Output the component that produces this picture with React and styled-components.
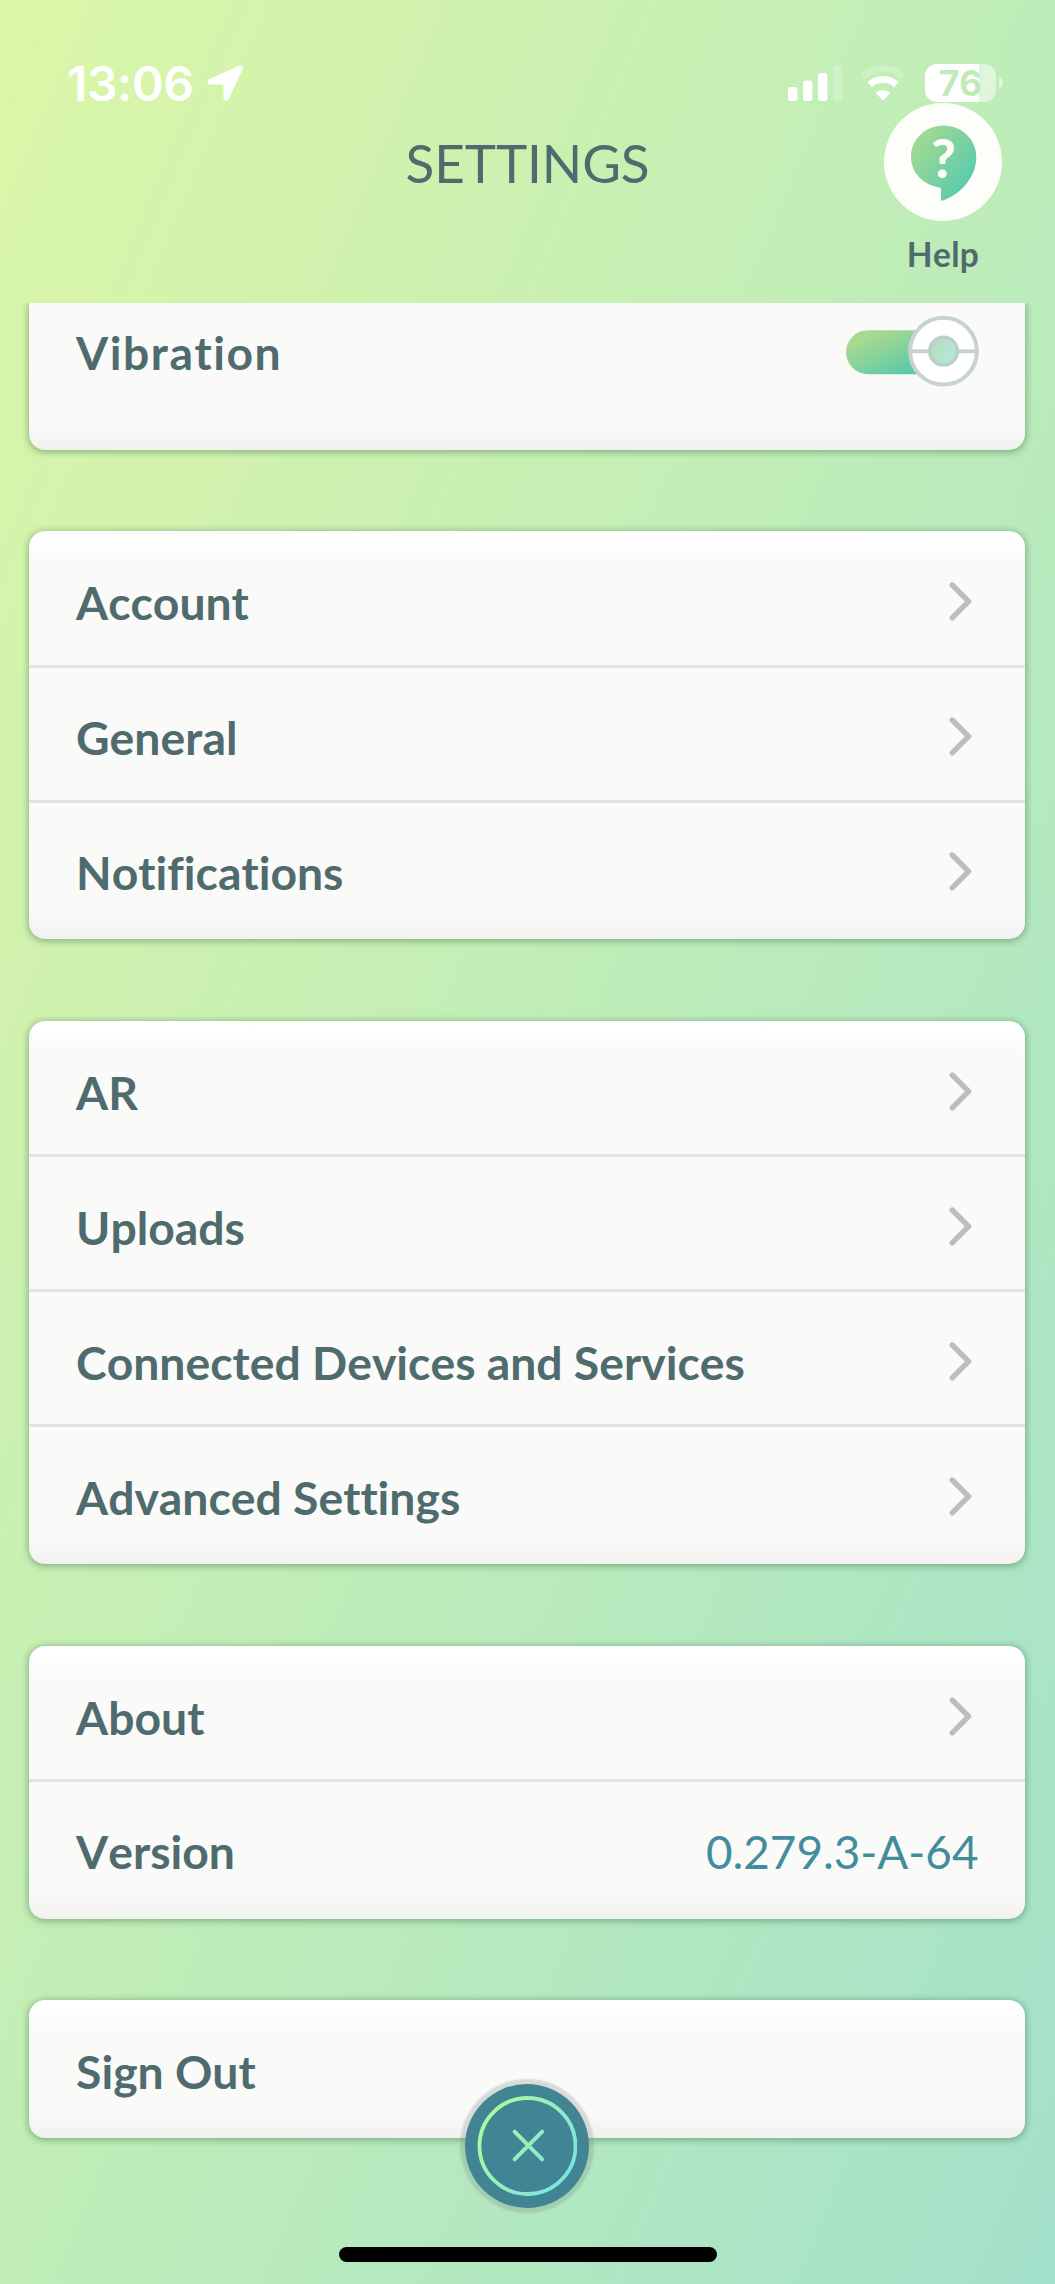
import styled, { createGlobalStyle } from "styled-components";

const groups = [
  [{ label: "Account" }, { label: "General" }, { label: "Notifications" }],
  [
    { label: "AR" },
    { label: "Uploads" },
    { label: "Connected Devices and Services" },
    { label: "Advanced Settings" },
  ],
  [{ label: "About" }, { label: "Version", value: "0.279.3-A-64" }],
  [{ label: "Sign Out", plain: true }],
];

const StatusBar = () => (
  <StatusStyled>
    <Clock>13:06</Clock>
    <svg className="location" width="38" height="38" viewBox="0 0 38 38">
      <path
        d="M33.2 1.6 L3.4 15.2 C0.6 16.8 1.2 20.2 4.2 20.4 H16.4 C17.1 20.4 17.5 20.8 17.5 21.5 V34 C17.7 37.4 21.2 38 22.7 35 L36.6 5 C37.8 2.2 35.8 0.6 33.2 1.6 Z"
        fill="#fff"
      />
    </svg>
    <svg className="signal" width="55" height="36" viewBox="0 0 55 36" fill="#fff">
      <rect x="0" y="22" width="9.4" height="14" rx="2.8" />
      <rect x="15" y="15.5" width="9.4" height="20.5" rx="2.8" />
      <rect x="30" y="8" width="9.4" height="28" rx="2.8" />
      <rect x="45" y="0.5" width="9.4" height="35.5" rx="2.8" opacity="0.22" />
    </svg>
    <svg className="wifi" width="46" height="36" viewBox="0 0 46 36" fill="none">
      <path
        d="M2.5 12 C14 0.6 32 0.6 43.5 12"
        stroke="#fff"
        strokeOpacity="0.22"
        strokeWidth="6.6"
      />
      <path d="M9.7 19.6 C17.5 12.6 28.5 12.6 36.3 19.6" stroke="#fff" strokeWidth="6.8" />
      <path d="M23 35.5 L15.6 28 C19.6 24.2 26.4 24.2 30.4 28 Z" fill="#fff" />
    </svg>
    <Battery>
      <span>76</span>
    </Battery>
    <svg width="4" height="14" viewBox="0 0 4 14">
      <path d="M0 1 C5 3.5 5 10.5 0 13 Z" fill="#fff" fillOpacity="0.5" />
    </svg>
  </StatusStyled>
);

const HelpIcon = () => (
  <svg width="118" height="118" viewBox="0 0 118 118">
    <defs>
      <linearGradient id="bubble" x1="0.1" y1="0.1" x2="0.85" y2="0.7">
        <stop offset="0" stopColor="#a5da92" />
        <stop offset="1" stopColor="#60ccaa" />
      </linearGradient>
    </defs>
    <circle cx="59" cy="59" r="59" fill="#fdfefa" />
    <path
      d="M59.5 22.5 C78 22.5 92.3 36.5 92.3 54 C92.3 74.5 76 92 58.3 97.7 C57.4 97.9 57 97.5 57 96.7 V86.1 C57 85.2 56.5 84.7 55.6 84.6 C39 81.8 27 69.5 27 54 C27 36.5 41 22.5 59.5 22.5 Z"
      fill="url(#bubble)"
    />
    <QuestionMark x="59.5" y="74.5">
      ?
    </QuestionMark>
  </svg>
);

const Toggle = () => (
  <svg width="133" height="72" viewBox="0 0 133 72">
    <defs>
      <linearGradient id="track" gradientUnits="userSpaceOnUse" x1="28" y1="18" x2="50" y2="66">
        <stop offset="0" stopColor="#a9d98f" />
        <stop offset="1" stopColor="#58c9ac" />
      </linearGradient>
      <linearGradient id="dot" x1="0" y1="0.3" x2="1" y2="0.7">
        <stop offset="0" stopColor="#b2dfbd" />
        <stop offset="1" stopColor="#b4e8da" />
      </linearGradient>
    </defs>
    <rect x="0" y="15.2" width="100" height="44" rx="22" fill="url(#track)" />
    <circle cx="97.5" cy="36.2" r="33.4" fill="#fff" stroke="#c7d3cf" strokeWidth="4" />
    <path d="M64 36.2 H131" stroke="#c7d3cf" strokeWidth="4" />
    <circle cx="97.5" cy="36.2" r="13.8" fill="url(#dot)" stroke="#bdcfc8" strokeWidth="3.6" />
  </svg>
);

const Chevron = () => (
  <svg width="24" height="40" viewBox="0 0 24 40">
    <path
      d="M3.2 4 L19.6 20.4 L3.2 36.8"
      fill="none"
      stroke="#bdbdbc"
      strokeWidth="5.4"
      strokeLinecap="round"
      strokeLinejoin="round"
    />
  </svg>
);

const CloseIcon = () => (
  <svg width="100" height="100" viewBox="0 0 100 100" fill="none">
    <defs>
      <linearGradient id="ring" gradientUnits="userSpaceOnUse" x1="10" y1="25" x2="90" y2="75">
        <stop offset="0" stopColor="#adf8a4" />
        <stop offset="1" stopColor="#80e4db" />
      </linearGradient>
    </defs>
    <circle cx="50.5" cy="50" r="48" stroke="url(#ring)" strokeWidth="3.8" />
    <path
      d="M37.6 35.6 L65.2 63.4 M65.2 35.6 L37.6 63.4"
      stroke="url(#ring)"
      strokeWidth="4"
      strokeLinecap="round"
    />
  </svg>
);

const App = () => {
  return (
    <>
      <GlobalStyle />
      <Screen>
        <StatusBar />
        <Header>
          <h1>SETTINGS</h1>
          <HelpButton>
            <HelpIcon />
            <span>Help</span>
          </HelpButton>
        </Header>
        <ScrollArea>
          <Card $cutOff>
            <Row $wide>
              <Label $wide>Vibration</Label>
              <Toggle />
            </Row>
          </Card>
          {groups.map((rows) => (
            <Card key={rows[0].label}>
              {rows.map(({ label, value, plain }) => (
                <Row key={label}>
                  <Label>{label}</Label>
                  {value && <Value>{value}</Value>}
                  {!value && !plain && (
                    <ChevronWrap>
                      <Chevron />
                    </ChevronWrap>
                  )}
                </Row>
              ))}
            </Card>
          ))}
        </ScrollArea>
        <CloseButton aria-label="Close">
          <CloseIcon />
        </CloseButton>
        <HomeIndicator />
      </Screen>
    </>
  );
};

const GlobalStyle = createGlobalStyle`
  * {
    box-sizing: border-box;
  }
  body {
    margin: 0;
  }
  svg {
    display: block;
    flex-shrink: 0;
  }
`;

const Screen = styled.div`
  position: relative;
  display: flex;
  flex-direction: column;
  width: 1055px;
  height: 2284px;
  overflow: hidden;
  font-family: "Lato", sans-serif;
  font-kerning: none;
  font-variant-ligatures: none;
  color: #4f6b6e;
  background: linear-gradient(
    113deg,
    #dbf7a8 0%,
    #d0f2ae 22%,
    #bfedb8 50%,
    #b0e7c2 76%,
    #a4e1cb 100%
  );
`;

const StatusStyled = styled.div`
  display: flex;
  align-items: flex-end;
  height: 102px;
  padding: 0 52px 0 67px;

  .location {
    margin-left: 11px;
  }
  .signal {
    margin: 0 17px 1px auto;
  }
  .wifi {
    margin: 0 19px 1px 0;
  }
  svg:last-child {
    margin: 0 0 12px 3px;
  }
`;

const Clock = styled.div`
  width: 128px;
  font-family: "Inter", sans-serif;
  font-size: 48px;
  font-weight: 600;
  line-height: 37px;
  letter-spacing: -0.4px;
  color: #fff;
  white-space: nowrap;
`;

const Battery = styled.div`
  width: 71px;
  height: 38px;
  border-radius: 12px;
  background: linear-gradient(90deg, #fff 76%, rgba(255, 255, 255, 0.5) 76%);
  font-family: "Inter", sans-serif;
  font-size: 35px;
  font-weight: 700;
  line-height: 39px;
  text-align: center;
  color: #bfebb9;
`;

const Header = styled.header`
  display: grid;
  grid-template-columns: 1fr auto 1fr;
  height: 200.5px;
  padding: 0 53px;

  h1 {
    grid-column: 2;
    margin: 0;
    padding-top: 29px;
    font-size: 53px;
    font-weight: 400;
    line-height: 64px;
    letter-spacing: -0.1px;
  }
`;

const HelpButton = styled.div`
  display: flex;
  flex-direction: column;
  align-items: center;
  justify-self: end;
  padding-top: 0.5px;

  span {
    margin-top: 13.5px;
    font-size: 33.5px;
    font-weight: 700;
    line-height: 40px;
    letter-spacing: 0.3px;
  }
`;

const QuestionMark = styled.text`
  font-family: "Lato", sans-serif;
  font-size: 53px;
  font-weight: 900;
  text-anchor: middle;
  fill: #fdfefa;
`;

const ScrollArea = styled.main`
  display: flex;
  flex: 1;
  flex-direction: column;
  gap: 81.7px;
  padding: 0 30.5px 0 28.5px;
  overflow: hidden;
`;

const Card = styled.section`
  flex-shrink: 0;
  padding-bottom: ${({ $cutOff }) => ($cutOff ? "49.5px" : "4.5px")};
  border-radius: ${({ $cutOff }) => ($cutOff ? "0 0 16px 16px" : "16px")};
  background: linear-gradient(
      to bottom,
      ${({ $cutOff }) => ($cutOff ? "transparent" : "#fff")} 0,
      ${({ $cutOff }) => ($cutOff ? "transparent" : "#fff")} 8px,
      transparent 30px,
      transparent calc(100% - 28px),
      #f1f2ef 100%
    ),
    #fafaf9;
  box-shadow: 0 1px 6px 1px rgba(70, 120, 80, 0.4), 0 2px 9px rgba(70, 120, 80, 0.18);
`;

const Row = styled.div`
  display: flex;
  align-items: center;
  justify-content: space-between;
  height: ${({ $wide }) => ($wide ? "97.5px" : "135px")};
  padding: ${({ $wide }) => ($wide ? "0 46px 0 47.5px" : "5.5px 46px 0 47.5px")};

  /* the divider eats into the row below it */
  &:first-child {
    height: ${({ $wide }) => ($wide ? "97.5px" : "133.5px")};
    padding-top: ${({ $wide }) => ($wide ? "0" : "7px")};
  }

  & + & {
    padding-top: 5px;
    border-top: 3px solid #e3e4e2;
  }
`;

const Label = styled.div`
  padding-top: ${({ $wide }) => ($wide ? "1px" : "1.5px")};
  font-size: 46.3px;
  font-weight: 700;
  line-height: 56px;
  letter-spacing: ${({ $wide }) => ($wide ? "1.5px" : "0")};
  white-space: nowrap;
`;

const Value = styled.div`
  padding-top: 3px;
  font-size: 45.8px;
  line-height: 56px;
  color: #438c9c;
`;

const ChevronWrap = styled.div`
  padding-right: 6px;
`;

const CloseButton = styled.button`
  position: absolute;
  left: 465px;
  top: 2084px;
  display: flex;
  align-items: center;
  justify-content: center;
  width: 124px;
  height: 124px;
  padding: 0;
  border: 0;
  border-radius: 50%;
  background: #418494;
  box-shadow: 0 0 2px 5px rgba(110, 120, 120, 0.24);
`;

const HomeIndicator = styled.div`
  position: absolute;
  left: 339px;
  bottom: 22px;
  width: 378px;
  height: 15px;
  border-radius: 8px;
  background: #000;
`;

export default App;
